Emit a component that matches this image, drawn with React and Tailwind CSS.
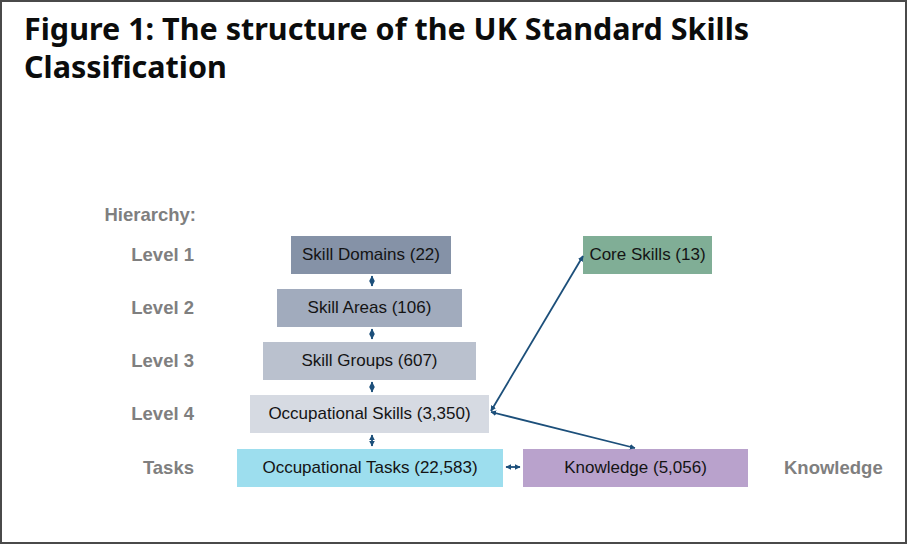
import React from "react";

const boxText = "flex items-center justify-center h-[38px] text-[17px] text-[#141414]";

function Row({ label, children, className = "" }) {
  return (
    <div className={"flex items-center h-[38px] " + className}>
      <div className="w-[192px] shrink-0 text-right text-[18.5px] font-bold text-[#7f7f7f]">{label}</div>
      {children}
    </div>
  );
}

export default function App() {
  return (
    <div
      className="relative w-[907px] h-[544px] bg-white border-2 border-[#4a4a4a] overflow-hidden"
      style={{ fontFamily: '"Liberation Sans", Arial, sans-serif' }}
    >
      <h1
        className="pl-[22px] pt-[7px] text-[30.5px] leading-[38px] font-bold text-[#0b0c0c]"
        style={{ fontFamily: '"Noto Sans", "Liberation Sans", sans-serif' }}
      >
        Figure 1: The structure of the UK Standard Skills
        <br />
        Classification
      </h1>

      <div className="mt-[118px]">
        <div className="w-[194px] text-right text-[18.5px] font-bold text-[#7f7f7f] leading-[24px]">Hierarchy:</div>
        <div className="mt-[9px] flex flex-col gap-[15px]">
          <Row label="Level 1">
            <div className={boxText + " ml-[97px] w-[160px] bg-[#8592a7]"}>Skill Domains (22)</div>
            <div className={boxText + " ml-[132px] w-[129px] bg-[#80ae96]"}>Core Skills (13)</div>
          </Row>
          <Row label="Level 2">
            <div className={boxText + " ml-[83px] w-[185px] bg-[#a1abbd]"}>Skill Areas (106)</div>
          </Row>
          <Row label="Level 3">
            <div className={boxText + " ml-[69px] w-[213px] bg-[#bac1ce]"}>Skill Groups (607)</div>
          </Row>
          <Row label="Level 4">
            <div className={boxText + " ml-[56px] w-[239px] bg-[#d6dae2]"}>Occupational Skills (3,350)</div>
          </Row>
          <Row label="Tasks" className="mt-[1px]">
            <div className={boxText + " ml-[43px] w-[266px] bg-[#9ddeee]"}>Occupational Tasks (22,583)</div>
            <div className={boxText + " ml-[20px] w-[225px] bg-[#b9a2cc]"}>Knowledge (5,056)</div>
            <div className="ml-[36px] text-[18.5px] font-bold text-[#7f7f7f]">Knowledge</div>
          </Row>
        </div>
      </div>

      <svg className="absolute left-[-2px] top-[-2px] pointer-events-none" width="907" height="544" viewBox="0 0 907 544">
        <defs>
          <marker id="ah" viewBox="0 0 10 10" refX="9" refY="5" markerWidth="3.2" markerHeight="3.2" orient="auto-start-reverse">
            <path d="M0 0 L10 5 L0 10 z" fill="#1c4f7a" />
          </marker>
        </defs>
        <g stroke="#1c4f7a" strokeWidth="1.8" fill="none">
          <line x1="372" y1="276" x2="372" y2="286" markerStart="url(#ah)" markerEnd="url(#ah)" />
          <line x1="372" y1="329" x2="372" y2="339" markerStart="url(#ah)" markerEnd="url(#ah)" />
          <line x1="372" y1="382" x2="372" y2="392" markerStart="url(#ah)" markerEnd="url(#ah)" />
          <line x1="372" y1="435" x2="372" y2="446" markerStart="url(#ah)" markerEnd="url(#ah)" />
          <line x1="506" y1="467" x2="520" y2="467" markerStart="url(#ah)" markerEnd="url(#ah)" />
          <line x1="491" y1="411" x2="583" y2="256" markerStart="url(#ah)" markerEnd="url(#ah)" />
          <line x1="491" y1="412" x2="635" y2="448" markerStart="url(#ah)" markerEnd="url(#ah)" />
        </g>
      </svg>
    </div>
  );
}
